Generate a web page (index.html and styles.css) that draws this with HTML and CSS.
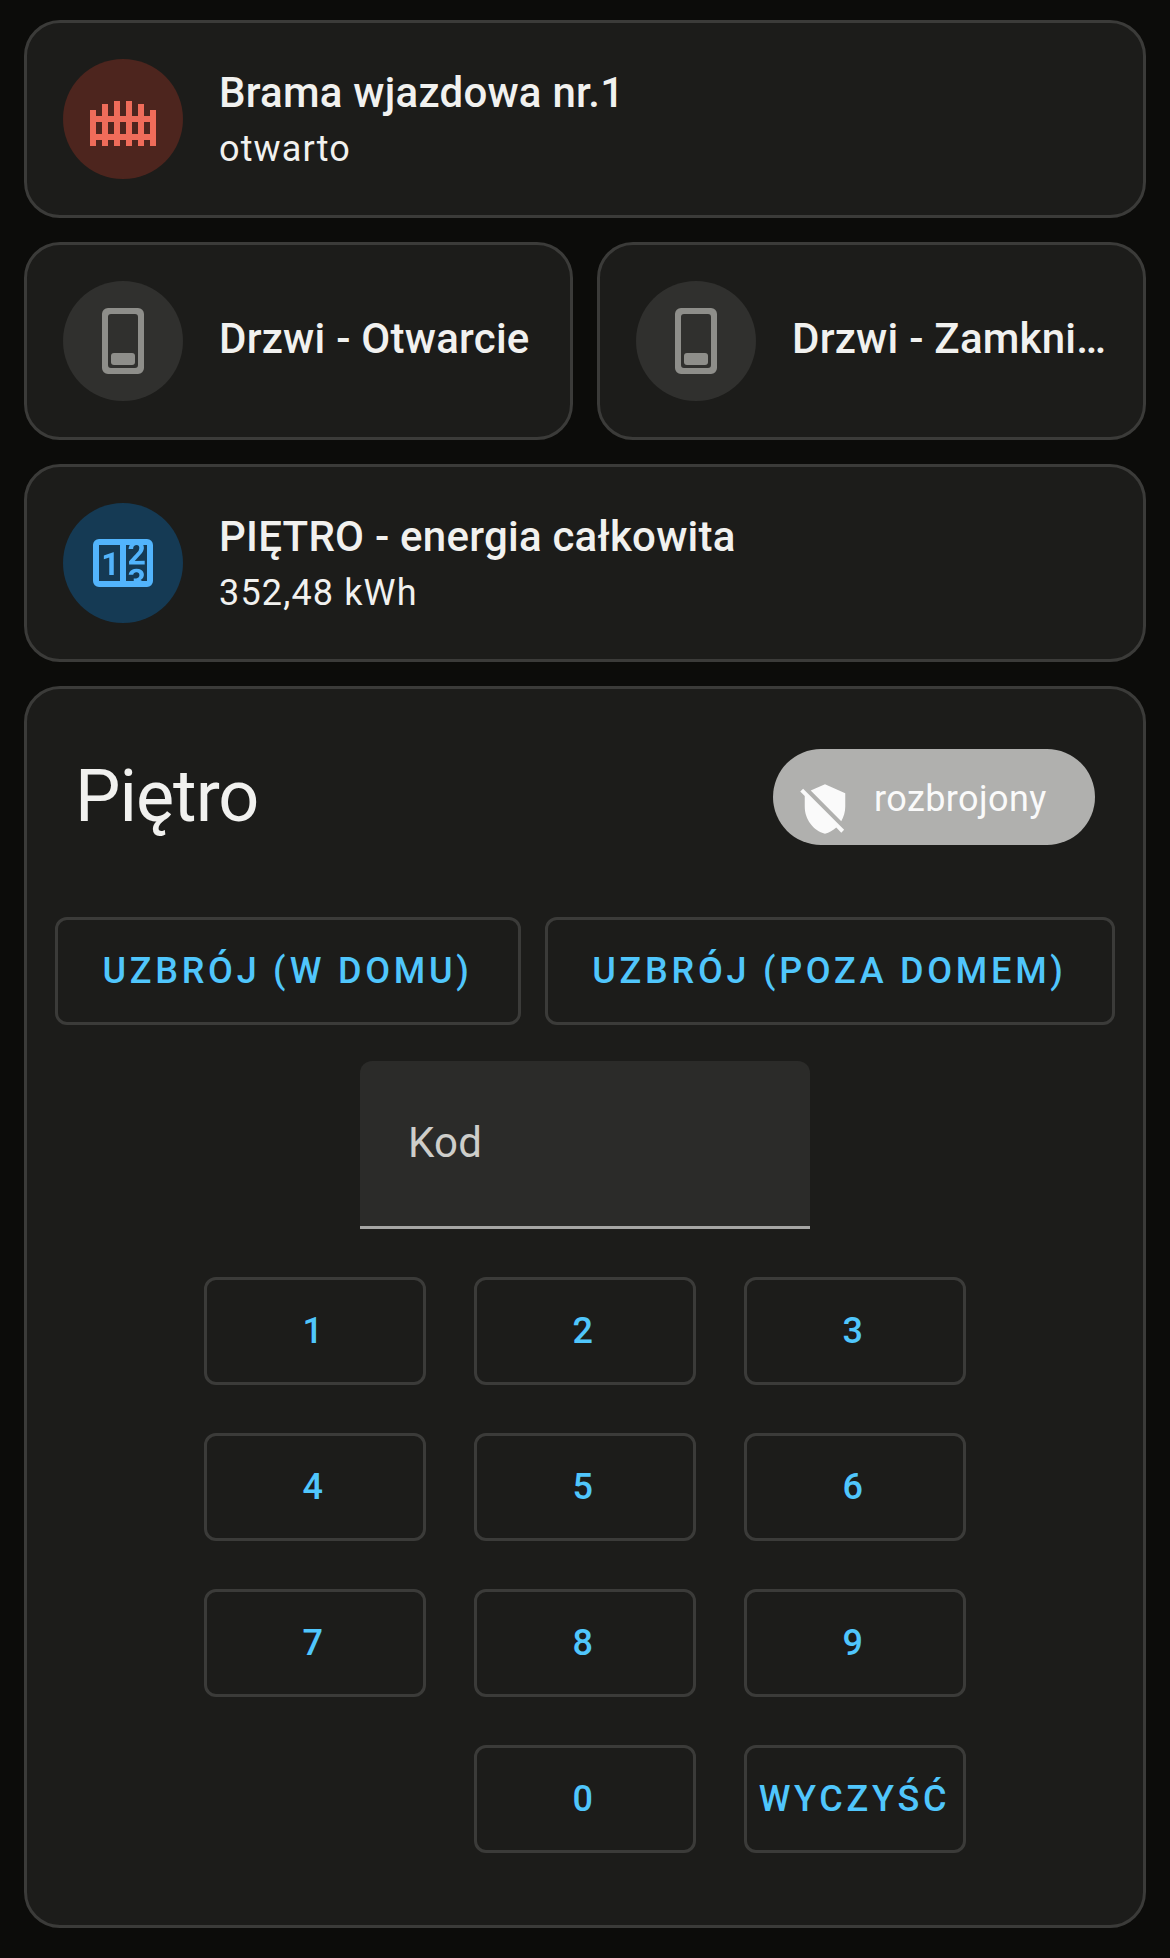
FILE: index.html
```html
<!DOCTYPE html>
<html lang="pl">
<head>
    <meta charset="UTF-8">
    <meta name="viewport" content="width=device-width, initial-scale=1.0">
    <title>Piętro</title>
    <link rel="stylesheet" href="styles.css">
</head>
<body>
    <main class="view">
        <!-- Brama -->
        <div class="card tile">
            <div class="tile-icon red">
                <svg viewBox="0 0 24 24"><path d="M9 6V11H7V7H5V11H3V9H1V21H3V19H5V21H7V19H9V21H11V19H13V21H15V19H17V21H19V19H21V21H23V9H21V11H19V7H17V11H15V6H13V11H11V6H9M3 13H5V17H3V13M7 13H9V17H7V13M11 13H13V17H11V13M15 13H17V17H15V13M19 13H21V17H19V13Z"/></svg>
            </div>
            <div class="tile-info">
                <span class="primary">Brama wjazdowa nr.1</span>
                <span class="secondary">otwarto</span>
            </div>
        </div>

        <!-- Drzwi -->
        <div class="row">
            <div class="card tile">
                <div class="tile-icon grey">
                    <svg viewBox="0 0 24 24"><path fill-rule="evenodd" d="M7 1H17A2 2 0 0 1 19 3V21A2 2 0 0 1 17 23H7A2 2 0 0 1 5 21V3A2 2 0 0 1 7 1M8 3A1 1 0 0 0 7 4V20A1 1 0 0 0 8 21H16A1 1 0 0 0 17 20V4A1 1 0 0 0 16 3Z"/><rect x="8" y="16" width="8" height="4" rx="1"/></svg>
                </div>
                <div class="tile-info single">
                    <span class="primary">Drzwi - Otwarcie</span>
                </div>
            </div>
            <div class="card tile">
                <div class="tile-icon grey">
                    <svg viewBox="0 0 24 24"><path fill-rule="evenodd" d="M7 1H17A2 2 0 0 1 19 3V21A2 2 0 0 1 17 23H7A2 2 0 0 1 5 21V3A2 2 0 0 1 7 1M8 3A1 1 0 0 0 7 4V20A1 1 0 0 0 8 21H16A1 1 0 0 0 17 20V4A1 1 0 0 0 16 3Z"/><rect x="8" y="16" width="8" height="4" rx="1"/></svg>
                </div>
                <div class="tile-info single">
                    <span class="primary">Drzwi - Zamkni…</span>
                </div>
            </div>
        </div>

        <!-- Energia -->
        <div class="card tile">
            <div class="tile-icon blue">
                <svg viewBox="0 0 24 24"><path d="M4,4H20A2,2 0 0,1 22,6V18A2,2 0 0,1 20,20H4A2,2 0 0,1 2,18V6A2,2 0 0,1 4,4M4,6V18H11V6H4M20,18V6H18.76C19,6.54 18.95,7.07 18.95,7.13C18.88,7.8 18.41,8.5 18.24,8.75L15.91,11.3L19.23,11.28L19.24,12.5L14.04,12.47L14,11.47C14,11.47 17.05,8.24 17.2,7.95C17.34,7.67 17.91,6 16.5,6C15.27,6.05 15.41,7.3 15.41,7.3L13.87,7.31C13.87,7.31 13.88,6.65 14.25,6H13V18H15.58L15.57,17.14L16.54,17.13C16.54,17.13 17.45,16.97 17.46,16.08C17.5,15.08 16.65,15.08 16.5,15.08C16.37,15.08 15.43,15.13 15.43,15.95H13.91C13.91,15.95 13.95,13.89 16.5,13.89C19.1,13.89 18.96,15.91 18.96,15.91C18.96,15.91 19,17.16 17.85,17.63L18.37,18H20M8.92,16H7.42V10.2L5.62,10.76V9.53L8.76,8.41H8.92V16Z"/></svg>
            </div>
            <div class="tile-info">
                <span class="primary">PIĘTRO - energia całkowita</span>
                <span class="secondary">352,48 kWh</span>
            </div>
        </div>

        <!-- Alarm -->
        <div class="card alarm">
            <div class="alarm-header">
                <h1>Piętro</h1>
                <div class="chip">
                    <svg viewBox="0 0 24 24"><path d="M1,4.27L2.28,3L20.5,21.22L19.23,22.5L17,20.25C15.57,21.57 13.87,22.54 12,23C6.84,21.74 3,16.55 3,11V6.27L1,4.27M12,1L21,5V11C21,13.28 20.35,15.5 19.23,17.41L5.65,3.82L12,1Z"/></svg>
                    <span class="chip-text">rozbrojony</span>
                </div>
            </div>
            <div class="actions">
                <button class="btn arm-home">UZBRÓJ (W DOMU)</button>
                <button class="btn arm-away">UZBRÓJ (POZA DOMEM)</button>
            </div>
            <input class="code" type="text" placeholder="Kod">
            <div class="keypad">
                <button class="btn">1</button>
                <button class="btn">2</button>
                <button class="btn">3</button>
                <button class="btn">4</button>
                <button class="btn">5</button>
                <button class="btn">6</button>
                <button class="btn">7</button>
                <button class="btn">8</button>
                <button class="btn">9</button>
                <button class="btn zero">0</button>
                <button class="btn">WYCZYŚĆ</button>
            </div>
        </div>
    </main>
</body>
</html>
```
FILE: styles.css
```css
* {
    box-sizing: border-box;
}
body {
    margin: 0;
    background-color: #0c0c0a;
    color: #f1f1ef;
    font-family: Roboto, sans-serif;
}
.view {
    display: flex;
    flex-direction: column;
    gap: 24px;
    padding: 20px 24px 30px;
}
.card {
    background-color: #1c1c1a;
    border: 3px solid #3b3b39;
    border-radius: 36px;
}
.row {
    display: grid;
    grid-template-columns: 1fr 1fr;
    gap: 24px;
}

/* Tiles */
.tile {
    display: flex;
    align-items: center;
    gap: 36px;
    height: 198px;
    padding: 36px;
    min-width: 0;
}
.tile-icon {
    display: flex;
    align-items: center;
    justify-content: center;
    flex: none;
    width: 120px;
    height: 120px;
    border-radius: 50%;
}
.tile-icon svg {
    width: 72px;
    height: 72px;
    fill: currentColor;
}
.red {
    background-color: #4d251e;
    color: #ef6c5a;
}
.grey {
    background-color: #30302e;
    color: #8e8e8a;
}
.blue {
    background-color: #153a54;
    color: #52b4fc;
}
.tile-info {
    display: flex;
    flex-direction: column;
    min-width: 0;
    white-space: nowrap;
}
.single {
    padding-bottom: 5px;
}
.primary {
    font-size: 42px;
    font-weight: 500;
    line-height: 60px;
    letter-spacing: 0.24px;
}
.secondary {
    font-size: 36px;
    line-height: 52px;
    letter-spacing: 1.15px;
}

/* Alarm panel */
.alarm {
    height: 1242px;
    padding: 0 28px;
}
.alarm-header {
    display: flex;
    align-items: center;
    justify-content: space-between;
    height: 216px;
    padding: 0 20px;
}
h1 {
    margin: 0;
    font-size: 72px;
    font-weight: 400;
    line-height: 96px;
    letter-spacing: -1px;
}
.chip {
    display: flex;
    align-items: center;
    gap: 22px;
    width: 322px;
    height: 96px;
    padding-left: 25px;
    border-radius: 48px;
    background-color: #b0b0ae;
    color: #fafafa;
    font-size: 36px;
    letter-spacing: 0.4px;
}
.chip svg {
    width: 54px;
    height: 54px;
    margin-top: 24px;
    fill: currentColor;
}
.chip-text {
    padding-top: 3px;
}
.actions {
    display: flex;
    gap: 24px;
    margin: 12px -2px 36px 0;
}
.btn {
    height: 108px;
    padding: 0 1px 0 0;
    border: 3px solid #3b3b39;
    border-radius: 12px;
    background: none;
    color: #50c6fc;
    font-family: inherit;
    font-size: 36px;
    font-weight: 500;
    letter-spacing: 3.75px;
}
.arm-home {
    width: 466px;
}
.arm-away {
    width: 570px;
}
.code {
    display: block;
    width: 450px;
    height: 168px;
    margin: 0 auto 48px;
    padding: 0 48px 2px;
    border: none;
    border-bottom: 3px solid #a6a6a4;
    border-radius: 12px 12px 0 0;
    background-color: #2b2b29;
    color: #f1f1ef;
    font-family: inherit;
    font-size: 42px;
    letter-spacing: 0.3px;
}
.code::placeholder {
    color: #cececa;
}
.keypad {
    display: grid;
    grid-template-columns: repeat(3, 222px);
    gap: 48px;
    justify-content: center;
}
.zero {
    grid-column: 2;
}
```
